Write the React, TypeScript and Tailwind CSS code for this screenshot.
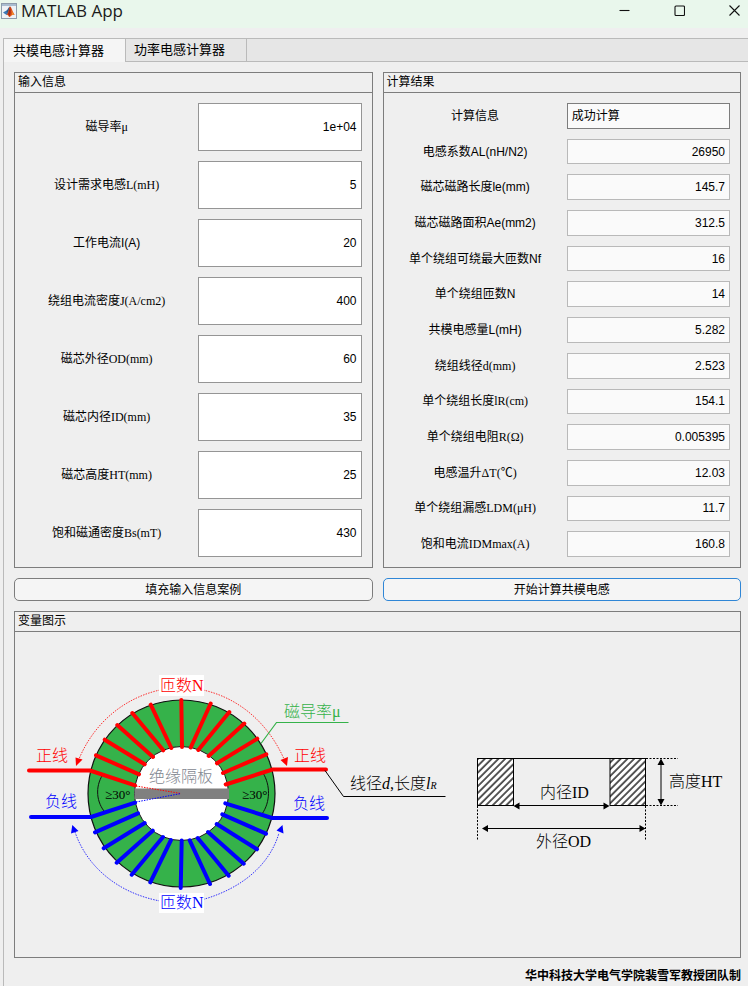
import React from "react";

const SANS = "font-['Liberation_Sans','Noto_Sans_CJK_SC',sans-serif]";
const SERIF = "font-['Liberation_Serif','Noto_Sans_CJK_SC',serif]";

type Field = { id: string; label: string; value: string; serif?: boolean; text?: boolean };

const inputs: Field[] = [
  { id: "mu", label: "磁导率μ", value: "1e+04", serif: true },
  { id: "l-req", label: "设计需求电感L(mH)", value: "5", serif: true },
  { id: "current", label: "工作电流I(A)", value: "20" },
  { id: "density", label: "绕组电流密度J(A/cm2)", value: "400", serif: true },
  { id: "od", label: "磁芯外径OD(mm)", value: "60", serif: true },
  { id: "id", label: "磁芯内径ID(mm)", value: "35", serif: true },
  { id: "ht", label: "磁芯高度HT(mm)", value: "25", serif: true },
  { id: "bs", label: "饱和磁通密度Bs(mT)", value: "430", serif: true },
];

const results: Field[] = [
  { id: "info", label: "计算信息", value: "成功计算", text: true },
  { id: "al", label: "电感系数AL(nH/N2)", value: "26950" },
  { id: "le", label: "磁芯磁路长度le(mm)", value: "145.7" },
  { id: "ae", label: "磁芯磁路面积Ae(mm2)", value: "312.5" },
  { id: "nf", label: "单个绕组可绕最大匝数Nf", value: "16" },
  { id: "n", label: "单个绕组匝数N", value: "14" },
  { id: "lcm", label: "共模电感量L(mH)", value: "5.282" },
  { id: "d", label: "绕组线径d(mm)", value: "2.523", serif: true },
  { id: "lr", label: "单个绕组长度lR(cm)", value: "154.1", serif: true },
  { id: "r", label: "单个绕组电阻R(Ω)", value: "0.005395", serif: true },
  { id: "dt", label: "电感温升ΔT(℃)", value: "12.03", serif: true },
  { id: "ldm", label: "单个绕组漏感LDM(μH)", value: "11.7", serif: true },
  { id: "idm", label: "饱和电流IDMmax(A)", value: "160.8", serif: true },
];

function MatlabIcon() {
  return (
    <svg width="16" height="16" viewBox="0 0 16 16" aria-hidden="true">
      <rect x="0.5" y="0.5" width="15" height="15" fill="#eef2f6" stroke="#8e9cab" />
      <rect x="1" y="1" width="14" height="2" fill="#a9bdd0" />
      <path d="M2 9.5 5.500 7.500 8 10.500 5.500 12z" fill="#3a78b5" />
      <path d="M5 8c1.500-.3 2-3.500 4-4.500L7.500 10.500z" fill="#2b5c8f" />
      <path d="M9 3.500c1.500 0 2.500 6 5 8.500-1.500-.6-2.500-.4-3.500.5-.8.800-1.500 1.500-2.500 1.500-.6-1.700-1.300-2-2.500-2C7.500 10 8 4.500 9 3.500z" fill="#e0561c" />
      <path d="M9 3.500c-.7 2-.8 5-2 7.500l1.200 2c1-.2 1.500-2.500 1.500-4.500s-.2-4-.7-5z" fill="#a52a17" />
      <path d="M10.500 7.500c.5 1.500.7 3 .3 4.500.8-.6 1.500-.7 2.400-.5-1.200-1-1.900-2.600-2.700-4z" fill="#f29a2e" />
    </svg>
  );
}

function TitleBar() {
  return (
    <header className="flex h-7 items-start justify-between bg-[#e9f7ec]">
      <div className="flex items-center gap-1 pl-px">
        <MatlabIcon />
        <h1 className="font-['Open_Sans','Noto_Sans',sans-serif] text-[17px] leading-[22px] text-[#1b1b1b]">
          MATLAB App
        </h1>
      </div>
      <div className="flex h-5 items-center">
        {[
          ["最小化", "M0.500 5.500H10.500"],
          ["最大化", "M2 1H9.500Q10.500 1 10.500 2V9.500Q10.500 10.500 9.500 10.500H2Q1 10.500 1 9.500V2Q1 1 2 1Z"],
          ["关闭", "M0.500 0.500 10.500 10.500M10.500 0.500 0.500 10.500"],
        ].map(([name, d]) => (
          <button key={name} type="button" aria-label={name} className="flex w-[55px] justify-end pr-[8px]">
            <svg width="11" height="11" viewBox="0 0 11 11" fill="none" stroke="#111" strokeWidth="1.1">
              <path d={d} />
            </svg>
          </button>
        ))}
      </div>
    </header>
  );
}

function Panel({ title, children }: { title: string; children: React.ReactNode }) {
  return (
    <section className="flex flex-col border border-[#7d7d7d]">
      <h2 className="h-5 border-b border-[#7d7d7d] px-[3px] text-xs leading-[18px]">{title}</h2>
      {children}
    </section>
  );
}

function InputRow({ field }: { field: Field }) {
  return (
    <div className="grid grid-cols-2 items-center gap-[10px]">
      <label htmlFor={field.id} className={`text-center text-xs whitespace-nowrap ${field.serif ? SERIF : SANS}`}>
        {field.label}
      </label>
      <input
        id={field.id}
        defaultValue={field.value}
        className="h-12 w-full min-w-0 border border-[#959595] bg-white px-1 text-right text-xs outline-none"
      />
    </div>
  );
}

function ResultRow({ field }: { field: Field }) {
  return (
    <div className="grid grid-cols-2 gap-[10px]">
      <label
        htmlFor={`out-${field.id}`}
        className={`self-center text-center text-xs whitespace-nowrap ${field.serif ? SERIF : SANS}`}
      >
        {field.label}
      </label>
      <input
        id={`out-${field.id}`}
        readOnly
        value={field.value}
        className={`w-full min-w-0 border bg-[#fafafa] px-1 text-xs outline-none ${
          field.text ? "border-[#7d7d7d] text-left" : "border-[#b9b9b9] text-right"
        }`}
      />
    </div>
  );
}

const redTurns =
  "M29 770.500H90L135 785.300 M96 755.300 139 774.300 M104.700 739.700 144.700 764.300 M117.300 725 153 757 M132.300 713 163.300 750.300 M150.700 704.700 171.300 748 M181.300 700 182 747 M210.700 703.500 190.700 747.500 M229.300 712 198.300 750 M244.300 723.500 208.700 756 M257.300 738.700 217 763.300 M266.300 754.300 223 773 M326 769.500H272.500L225.700 784.500";
const blueTurns =
  "M31 817H91L135 802.700 M95 832.300 138 813.300 M103.700 848.300 144.700 823 M116.700 862.700 152.700 830.700 M131.700 874.700 163 837 M150.300 882.300 171 840 M180.700 888 181.700 840.500 M210 884 189.700 840.300 M228.700 875.700 197.700 838 M243.700 863.700 208 832 M257 849.300 216.700 824 M266 833.700 222.300 814.300 M327 818H272L225.300 803.300";

function Diagram() {
  return (
    <svg
      viewBox="15 632 725 325"
      className="block h-auto w-full font-['Liberation_Serif','Noto_Sans_CJK_SC',serif] font-light"
      fontSize="16"
      fill="none"
      role="img"
      aria-label="共模电感变量图示"
    >
      <defs>
        <pattern id="hatch" width="4.800" height="4.800" patternUnits="userSpaceOnUse" patternTransform="rotate(45)">
          <rect width="4.800" height="4.800" fill="#fff" />
          <path d="M1 0V4.800" stroke="#000" strokeWidth="1.300" />
        </pattern>
      </defs>

      {/* toroid core and separator */}
      <circle cx="181.500" cy="793.500" r="93.500" fill="#35b24a" stroke="#111" strokeWidth="1.200" />
      <circle cx="181.500" cy="793.500" r="47" fill="#fff" stroke="#111" />
      <rect x="134.500" y="788.500" width="94.500" height="10.500" fill="#808080" />
      <path d="M104 773C95.500 784 95.500 800 104 811M263 773C270.500 785 270.500 802 262 814" stroke="#111" />

      {/* windings */}
      <g strokeWidth="4" strokeLinecap="round" strokeLinejoin="round">
        <path d={redTurns} stroke="#f00" />
        <path d={blueTurns} stroke="#00f" />
      </g>
      <g strokeDasharray="1.500 1.200">
        <path d="M136 786 181 793.500" stroke="#f00" />
        <path d="M136 802 181 793.500" stroke="#00f" />
      </g>

      {/* turn-count arcs */}
      <g strokeWidth="0.800" strokeDasharray="1.500 1.200">
        <path d="M160 690C124 698 94 723 79 759M203 690C239 698 268 723 284 759" stroke="#f00" />
        <path d="M160 901C118 893 87 867 75 832M203 899.500C243 888 270 864 279 833" stroke="#00f" />
      </g>
      <path d="M76 766 75.500 757.500 82.500 759.500ZM287 766 280.500 760 288 757Z" fill="#f00" />
      <path d="M72.300 825 71 833.500 78.500 831ZM282.500 825 276.500 830.500 283.500 833.500Z" fill="#00f" />
      <rect x="159" y="675" width="45" height="21" fill="#fff" />
      <rect x="159" y="893" width="45" height="20" fill="#fff" />
      <text x="160" y="691" fill="#f00">匝数N</text>
      <text x="160" y="908" fill="#00f">匝数N</text>

      <text x="36" y="761" fill="#f00">正线</text>
      <text x="294" y="761" fill="#f00">正线</text>
      <text x="45" y="807" fill="#00f">负线</text>
      <text x="293" y="809" fill="#00f">负线</text>
      <text x="149" y="782" fill="#7f8790">绝缘隔板</text>
      <g fill="#000" fontSize="13">
        <text x="105" y="799">≥30°</text>
        <text x="242" y="799">≥30°</text>
      </g>

      {/* permeability and wire callouts */}
      <path d="M261 743.500 276.500 722.500H348.500" stroke="#35b24a" strokeWidth="1.200" />
      <text x="284" y="717" fill="#35b24a">磁导率μ</text>
      <path d="M325 770.500 343.500 796.500H445.500" stroke="#000" />
      <text x="350" y="789" fill="#000">
        线径<tspan fontStyle="italic">d</tspan>,长度<tspan fontStyle="italic">l</tspan>
        <tspan fontStyle="italic" fontSize="10">R</tspan>
      </text>

      {/* cross-section */}
      <g stroke="#000">
        <rect x="477.500" y="758.500" width="36" height="47" fill="url(#hatch)" />
        <rect x="610" y="758.500" width="35.500" height="47" fill="url(#hatch)" />
        <path d="M513 758.500H610M517 805.500H606M484 828.500H643M661 762V802" />
        <path d="M477.500 806V841M645.500 806V841M646 758.500H678M646 805.500H678" strokeDasharray="2 1.500" />
      </g>
      <path
        d="M513.500 806 519.500 802.500V809.500ZM609.500 806 603.500 802.500V809.500ZM482 828.500 488 825V832ZM645.500 828.500 639.500 825V832ZM661 758.500 657.500 765H664.500ZM661 805.500 657.500 799H664.500Z"
        fill="#000"
      />
      <g fill="#000">
        <text x="540" y="798">内径ID</text>
        <text x="536" y="847">外径OD</text>
        <text x="669" y="787">高度HT</text>
      </g>
    </svg>
  );
}

export default function App() {
  return (
    <div className={`flex min-h-screen flex-col bg-[#efefef] text-black ${SANS}`}>
      <TitleBar />
      <main className="mt-[10px] ml-[3px] flex flex-1 flex-col border-t border-l border-[#bababa]">
        <div role="tablist" className="flex h-[23px] border-b border-[#bababa] bg-[#e6e6e6] text-[13px] leading-[22px]">
          <button
            type="button"
            role="tab"
            aria-selected="true"
            className="-mb-px h-[23px] w-[122px] border-r border-[#bababa] bg-[#f5f5f5] pl-[9px] text-left"
          >
            共模电感计算器
          </button>
          <button
            type="button"
            role="tab"
            aria-selected="false"
            className="w-[121px] border-r border-[#bababa] pl-2 text-left"
          >
            功率电感计算器
          </button>
        </div>

        <div className="flex flex-col gap-[10px] pt-[10px] pr-[7px] pl-[10px]">
          <div className="grid grid-cols-2 gap-[10px]">
            <Panel title="输入信息">
              <div className="flex flex-col gap-[10px] p-[10px]">
                {inputs.map((f) => (
                  <InputRow key={f.id} field={f} />
                ))}
              </div>
            </Panel>
            <Panel title="计算结果">
              <div className="grid flex-1 auto-rows-fr gap-[10px] p-[10px]">
                {results.map((f) => (
                  <ResultRow key={f.id} field={f} />
                ))}
              </div>
            </Panel>
            <button type="button" className="h-[23px] rounded-[5px] border border-[#7d7d7d] bg-[#f5f5f5] text-xs">
              填充输入信息案例
            </button>
            <button type="button" className="h-[23px] rounded-[5px] border border-[#2f86d6] bg-[#f5f5f5] text-xs">
              开始计算共模电感
            </button>
          </div>
          <Panel title="变量图示">
            <Diagram />
          </Panel>
          <p className="text-right text-xs leading-4 font-bold">华中科技大学电气学院裴雪军教授团队制</p>
        </div>
      </main>
    </div>
  );
}
